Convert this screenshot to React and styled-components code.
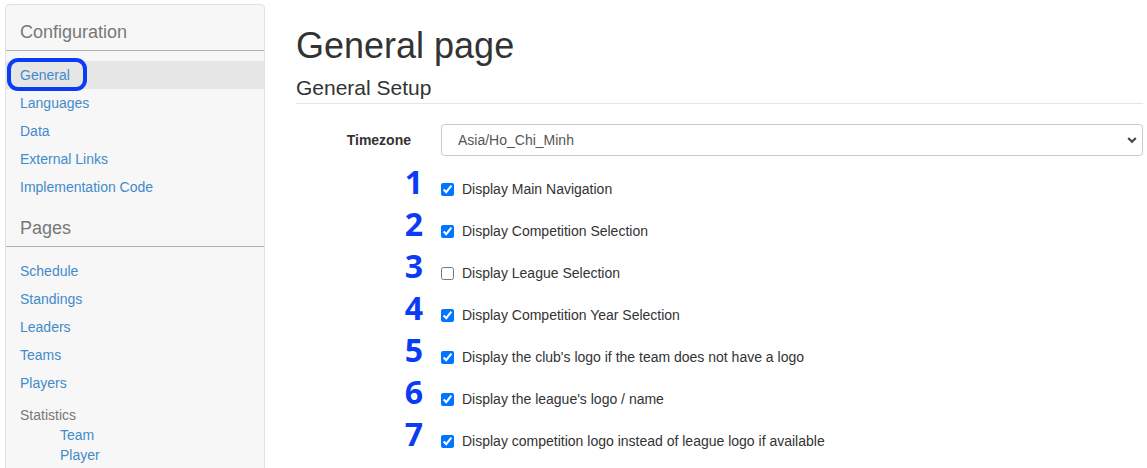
import { styled, createGlobalStyle } from 'styled-components';

const GlobalStyle = createGlobalStyle`
    body {
        margin: 0;
        background: #fff;
        font-family: "Liberation Sans", Arial, sans-serif;
        color: #333;
    }
`;

const configLinks = ['General', 'Languages', 'Data', 'External Links', 'Implementation Code'];
const pageLinks = ['Schedule', 'Standings', 'Leaders', 'Teams', 'Players'];
const statLinks = ['Team', 'Player'];

const options = [
    { label: 'Display Main Navigation', checked: true },
    { label: 'Display Competition Selection', checked: true },
    { label: 'Display League Selection', checked: false },
    { label: 'Display Competition Year Selection', checked: true },
    { label: "Display the club's logo if the team does not have a logo", checked: true },
    { label: "Display the league's logo / name", checked: true },
    { label: 'Display competition logo instead of league logo if available', checked: true },
];

const App = () => {
    return (
        <>
            <GlobalStyle />
            <Page>
                <Sidebar>
                    <SideHeading>Configuration</SideHeading>
                    <NavList>
                        {configLinks.map((name, i) => (
                            <NavItem key={name} $active={i === 0}>
                                <a href="#">{name}</a>
                                {i === 0 && <Highlight />}
                            </NavItem>
                        ))}
                    </NavList>
                    <SideHeading>Pages</SideHeading>
                    <NavList>
                        {pageLinks.map((name) => (
                            <NavItem key={name}>
                                <a href="#">{name}</a>
                            </NavItem>
                        ))}
                    </NavList>
                    <SubGroup>
                        <span>Statistics</span>
                        {statLinks.map((name) => (
                            <a key={name} href="#">{name}</a>
                        ))}
                    </SubGroup>
                </Sidebar>

                <Main>
                    <Title>General page</Title>
                    <Section>General Setup</Section>
                    <Form>
                        <FormRow $tall>
                            <FieldLabel>Timezone</FieldLabel>
                            <SelectWrap>
                                <select defaultValue="Asia/Ho_Chi_Minh">
                                    <option>Asia/Ho_Chi_Minh</option>
                                </select>
                                <svg width="10" height="8" viewBox="0 0 10 8">
                                    <path d="M1.2 2 L5 5.8 L8.8 2" fill="none" stroke="#444" strokeWidth="2.2" />
                                </svg>
                            </SelectWrap>
                        </FormRow>
                        {options.map((opt, i) => (
                            <FormRow key={opt.label}>
                                <Marker>{i + 1}</Marker>
                                <Check>
                                    <input type="checkbox" defaultChecked={opt.checked} />
                                    {opt.label}
                                </Check>
                            </FormRow>
                        ))}
                    </Form>
                </Main>
            </Page>
        </>
    );
};

const Page = styled.div`
    display: grid;
    grid-template-columns: 260px 1fr;
    column-gap: 31px;
    padding: 4px 4px 0 5px;
    align-items: start;
`;

const Sidebar = styled.aside`
    background-color: #f7f7f7;
    border: 1px solid #e3e3e3;
    border-radius: 4px;
    padding-bottom: 30px;
`;

const SideHeading = styled.h3`
    margin: 0;
    padding: 17px 14px 8px;
    font-size: 18px;
    line-height: 20px;
    font-weight: normal;
    color: #777;
    border-bottom: 1px solid #b0b0b0;
`;

const NavList = styled.ul`
    list-style: none;
    margin: 10px 0 0;
    padding: 0;
`;

const NavItem = styled.li`
    position: relative;
    height: 28px;
    display: flex;
    align-items: center;
    padding-left: 14px;
    background-color: ${(p) => (p.$active ? '#e6e6e6' : 'transparent')};

    & a {
        font-size: 14px;
        color: #428bca;
        text-decoration: none;
    }
`;

const Highlight = styled.span`
    position: absolute;
    left: 1px;
    top: -3px;
    width: 80px;
    height: 33px;
    box-sizing: border-box;
    border: 4px solid #0a3cf5;
    border-radius: 11px;
    pointer-events: none;
`;

const SubGroup = styled.div`
    display: flex;
    flex-direction: column;
    margin-top: 8px;
    padding-left: 14px;
    font-size: 14px;
    line-height: 20px;

    & span {
        color: #777;
    }

    & a {
        color: #428bca;
        text-decoration: none;
        padding-left: 40px;
    }
`;

const Main = styled.main`
    display: flex;
    flex-direction: column;
`;

const Title = styled.h1`
    margin: 22px 0 0;
    font-size: 36px;
    line-height: 40px;
    font-weight: normal;
    color: #333;
`;

const Section = styled.h2`
    margin: 10px 0 0;
    padding-bottom: 3px;
    font-size: 21px;
    line-height: 24px;
    font-weight: normal;
    color: #333;
    border-bottom: 1px solid #e5e5e5;
`;

const Form = styled.div`
    display: flex;
    flex-direction: column;
    margin-top: 20px;
`;

const FormRow = styled.div`
    display: grid;
    grid-template-columns: 125px 1fr;
    column-gap: 20px;
    align-items: center;
    height: ${(p) => (p.$tall ? '32px' : '42px')};
    margin-bottom: ${(p) => (p.$tall ? '10px' : '0')};
`;

const FieldLabel = styled.label`
    text-align: right;
    padding-right: 10px;
    font-size: 14px;
    font-weight: bold;
    color: #333;
`;

const SelectWrap = styled.div`
    position: relative;
    height: 32px;

    & select {
        appearance: none;
        width: 100%;
        height: 32px;
        box-sizing: border-box;
        border: 1px solid #ccc;
        border-radius: 4px;
        background: #fff;
        padding: 0 12px 0 16px;
        font-family: "Liberation Sans", Arial, sans-serif;
        font-size: 14px;
        color: #555;
    }

    & svg {
        position: absolute;
        right: 6px;
        top: 12px;
        pointer-events: none;
    }
`;

const Marker = styled.span`
    justify-self: end;
    margin-right: -2px;
    margin-bottom: 14px;
    font-family: "Open Sans", sans-serif;
    font-weight: 700;
    font-size: 32px;
    line-height: 32px;
    color: #0a3cf5;
`;

const Check = styled.label`
    display: flex;
    align-items: center;
    gap: 8px;
    font-size: 14px;
    color: #333;

    & input {
        margin: 0;
        width: 13px;
        height: 13px;
        accent-color: #0075ff;
    }
`;

export default App;
